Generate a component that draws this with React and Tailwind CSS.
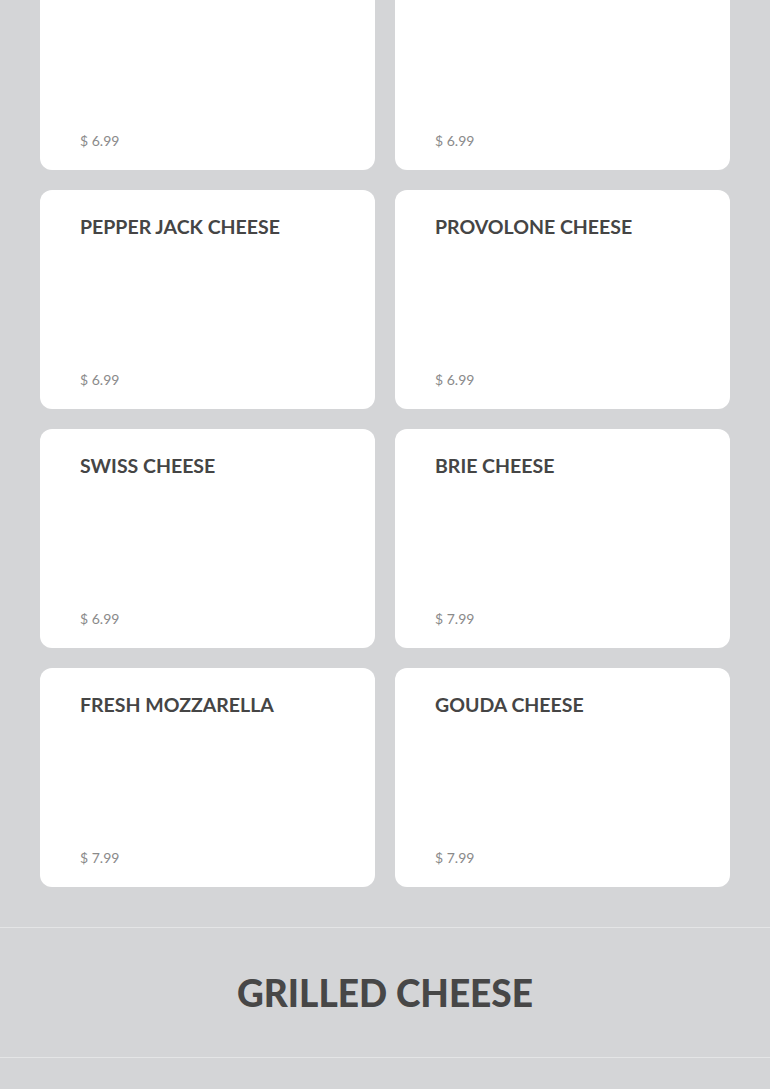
const items = [
  { name: "", price: "6.99" },
  { name: "", price: "6.99" },
  { name: "Pepper Jack Cheese", price: "6.99" },
  { name: "Provolone Cheese", price: "6.99" },
  { name: "Swiss Cheese", price: "6.99" },
  { name: "Brie Cheese", price: "7.99" },
  { name: "Fresh Mozzarella", price: "7.99" },
  { name: "Gouda Cheese", price: "7.99" },
]

function MenuCard({ name, price }) {
  return (
    <div className="flex h-[219px] flex-col justify-between rounded-xl bg-white px-10 pt-[25px] pb-[19px]">
      <h3 className="text-[19.5px] font-bold uppercase leading-[24px] text-[#454545]">
        {name}
      </h3>
      <p className="text-[14px] leading-[20px] text-[#8a8a8a]">$ {price}</p>
    </div>
  )
}

export default function App() {
  return (
    <div className="min-h-screen overflow-hidden bg-[#d4d5d7] font-['Lato','Liberation_Sans',sans-serif]">
      <div className="-mt-[49px] grid grid-cols-2 gap-5 px-10 pb-10">
        {items.map((item, i) => (
          <MenuCard key={i} {...item} />
        ))}
      </div>
      <section className="flex h-[131px] items-center justify-center border-y border-[#e4e5e6]">
        <h2 className="text-[37px] font-black uppercase leading-none text-[#474747]">
          Grilled Cheese
        </h2>
      </section>
    </div>
  )
}
